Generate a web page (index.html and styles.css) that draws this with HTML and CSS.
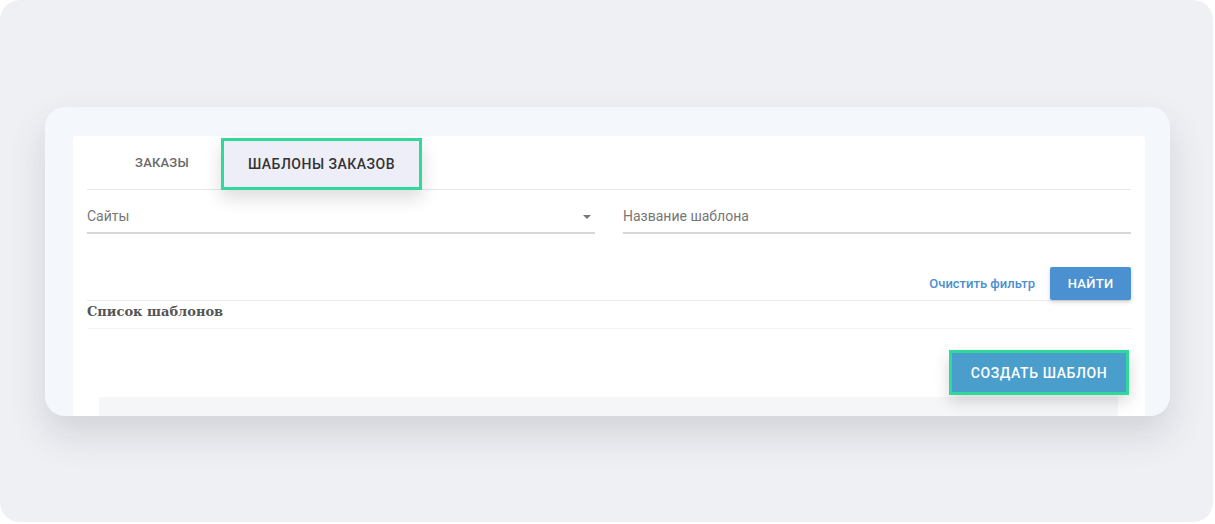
FILE: index.html
```html
<!DOCTYPE html>
<html lang="ru">
<head>
  <meta charset="UTF-8">
  <meta name="viewport" content="width=device-width, initial-scale=1.0">
  <link rel="stylesheet" href="styles.css">
  <title>Шаблоны заказов</title>
</head>
<body>

<div class="screen">
  <div class="card">
    <div class="panel">

      <div class="tabs">
        <div class="tab">Заказы</div>
        <div class="tab tab-active">Шаблоны заказов</div>
      </div>

      <div class="filters">
        <div class="field field-select">
          <span class="field-label">Сайты</span>
          <span class="arrow"></span>
        </div>
        <div class="field">
          <span class="field-label">Название шаблона</span>
        </div>
      </div>

      <div class="filter-actions">
        <a class="link" href="#">Очистить фильтр</a>
        <button class="btn btn-find">Найти</button>
      </div>

      <div class="list-header">Список шаблонов</div>

      <div class="create-row">
        <button class="btn btn-create">Создать шаблон</button>
      </div>

      <div class="table-area"></div>

    </div>
  </div>
</div>

</body>
</html>
```

FILE: styles.css
```css
body {
  font-family: Roboto, "Noto Sans", Arial, sans-serif;
  margin: 0;
  padding: 0;
  background-color: #ffffff;
}

.screen {
  width: 1213px;
  height: 522px;
  box-sizing: border-box;
  padding: 107px 0 0 45px;
  background-color: #eff0f4;
  border-radius: 20px;
}

.card {
  width: 1125px;
  height: 309px;
  box-sizing: border-box;
  padding: 29px 25px 0 28px;
  background-color: #f4f7fc;
  border-radius: 20px;
  box-shadow: 0 18px 36px rgba(60, 60, 80, 0.16);
  overflow: hidden;
}

.panel {
  height: 100%;
  box-sizing: border-box;
  padding: 0 14px;
  background-color: #fff;
  border-radius: 4px 4px 0 0;
}

/* tabs */
.tabs {
  display: flex;
  height: 53px;
  border-bottom: 1px solid #e6e6e6;
}

.tab {
  width: 118px;
  margin-left: 16px;
  display: flex;
  align-items: center;
  justify-content: center;
  font-size: 13px;
  font-weight: 500;
  letter-spacing: 0.2px;
  color: #6a6a6a;
  text-transform: uppercase;
}

.tab-active {
  width: 195px;
  height: 46px;
  margin: 2px 0 0 0;
  font-size: 14px;
  letter-spacing: 0.5px;
  color: #333;
  background-color: #eeeef8;
  border: 3px solid #2fd99a;
  box-shadow: 0 8px 18px rgba(0, 0, 0, 0.14);
}

/* filters */
.filters {
  display: flex;
  gap: 28px;
}

.field {
  flex: 1;
  position: relative;
  padding: 18px 0 8px;
  line-height: 16px;
  border-bottom: 2px solid #d8d8d8;
}

.field-label {
  font-size: 14px;
  color: #777;
}

.arrow {
  position: absolute;
  right: 4px;
  top: 25px;
  border-left: 4px solid transparent;
  border-right: 4px solid transparent;
  border-top: 4px solid #777;
}

.filter-actions {
  display: flex;
  justify-content: flex-end;
  align-items: center;
  gap: 15px;
  padding-top: 33px;
}

.link {
  font-size: 13px;
  font-weight: 500;
  color: #4a8fd0;
  text-decoration: none;
}

.btn {
  font-family: Roboto, Arial, sans-serif;
  font-weight: 500;
  color: #fff;
  text-transform: uppercase;
  border: none;
  cursor: pointer;
}

.btn-find {
  width: 81px;
  height: 33px;
  font-size: 13px;
  letter-spacing: 0.3px;
  background-color: #4b91d1;
  border-radius: 2px;
  box-shadow: 0 2px 4px rgba(0, 0, 0, 0.18);
}

/* list */
.list-header {
  height: 27px;
  line-height: 22px;
  font-family: "DejaVu Serif", serif;
  font-size: 13px;
  font-weight: bold;
  color: #555;
  border-top: 1px solid #ebebeb;
  border-bottom: 1px solid #f3f3f3;
}

.create-row {
  display: flex;
  justify-content: flex-end;
  padding: 21px 2px 0 0;
}

.btn-create {
  width: 180px;
  height: 45px;
  font-size: 14px;
  letter-spacing: 0.6px;
  background-color: #4a9ecc;
  border: 3px solid #2fd99a;
  box-shadow: 0 6px 16px rgba(0, 0, 0, 0.16);
}

.table-area {
  height: 30px;
  margin: 2px 13px 0 12px;
  background-color: #f5f6f8;
}
```
